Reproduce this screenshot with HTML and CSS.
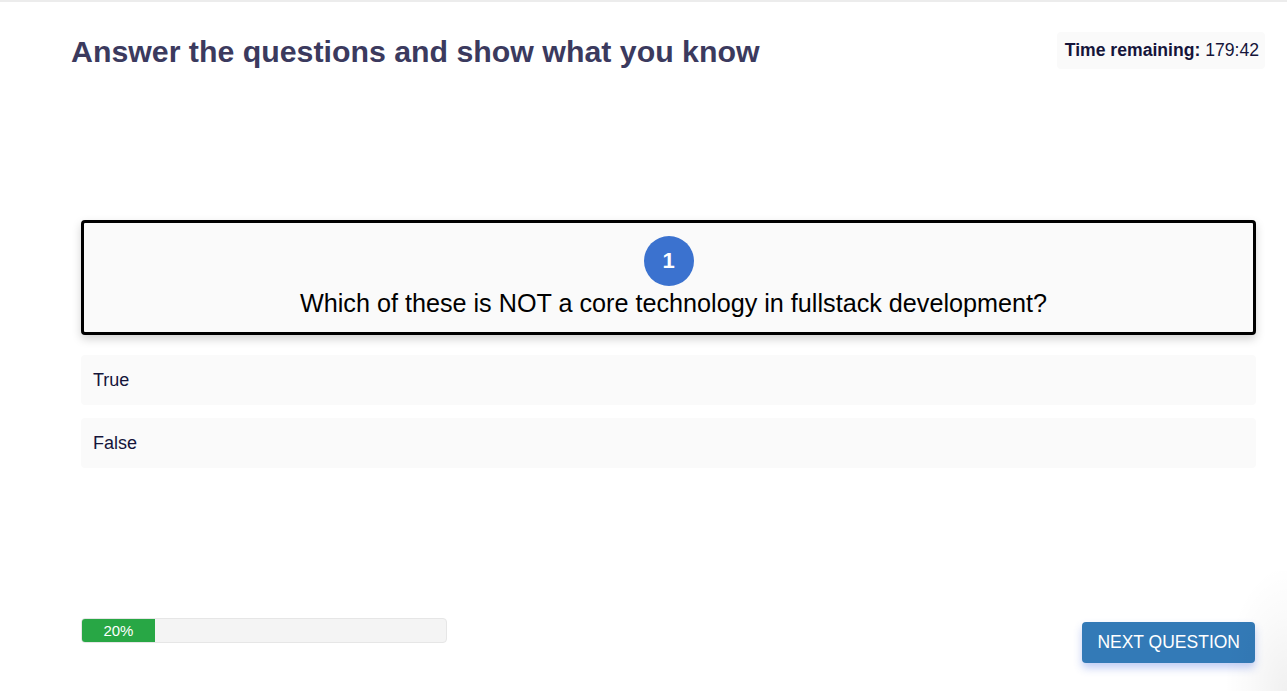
FILE: index.html
```html
<!DOCTYPE html>
<html lang="en">
<head>
<meta charset="utf-8">
<title>Quiz</title>
<link rel="stylesheet" href="styles.css">
</head>
<body>
<div class="page">
  <header class="header">
    <h1 class="title">Answer the questions and show what you know</h1>
    <div class="timer"><strong>Time remaining:</strong> 179:42</div>
  </header>
  <main class="quiz">
    <section class="question-card">
      <div class="q-number">1</div>
      <p class="q-text">Which of these is NOT a core technology in fullstack development?</p>
    </section>
    <ul class="options">
      <li class="option">True</li>
      <li class="option">False</li>
    </ul>
    <div class="footer">
      <div class="progress"><div class="progress-fill" style="width:20%">20%</div></div>
      <button class="next-btn">NEXT QUESTION</button>
    </div>
  </main>
</div>
</body>
</html>
```
FILE: styles.css
```css
* { box-sizing: border-box; }
html, body { margin: 0; padding: 0; }
body {
  font-family: "Liberation Sans", Arial, sans-serif;
  background: #ffffff;
  color: #1b1b3a;
  width: 1287px;
  height: 691px;
  overflow: hidden;
}
.page {
  border-top: 2px solid #ececec;
  height: 691px;
  position: relative;
}
.page::after {
  content: "";
  position: absolute;
  right: 0;
  bottom: 0;
  width: 60px;
  height: 120px;
  background: radial-gradient(ellipse at 100% 100%, rgba(0,0,0,0.06) 0%, rgba(0,0,0,0.02) 45%, rgba(0,0,0,0) 75%);
  pointer-events: none;
}
.header {
  display: flex;
  justify-content: space-between;
  align-items: flex-start;
  padding: 30px 22px 0 71px;
}
.title {
  margin: 2px 0 0;
  font-size: 30.3px;
  font-weight: 700;
  color: #3b3a5e;
  line-height: 36px;
}
.timer {
  background: #fafafa;
  border-radius: 4px;
  padding: 0 6px 0 8px;
  height: 37px;
  line-height: 37px;
  font-size: 17.6px;
  color: #15153a;
}
.quiz {
  margin: 150px 31px 0 81px;
}
.question-card {
  background: #fafafa;
  border: 3px solid #000;
  border-radius: 4px;
  box-shadow: 0 4px 10px rgba(0,0,0,0.18);
  height: 115px;
  display: flex;
  flex-direction: column;
  align-items: center;
  padding-top: 13px;
}
.q-number {
  width: 50px;
  height: 50px;
  border-radius: 50%;
  background: #3b72cf;
  color: #fff;
  font-weight: 700;
  font-size: 22px;
  display: flex;
  align-items: center;
  justify-content: center;
}
.q-text {
  margin: 2px 0 0;
  padding-left: 10px;
  font-size: 25.2px;
  line-height: 30px;
  color: #000;
}
.options {
  list-style: none;
  margin: 20px 0 0;
  padding: 0;
  display: flex;
  flex-direction: column;
  gap: 13px;
}
.option {
  background: #fafafa;
  border-radius: 4px;
  height: 50px;
  line-height: 50px;
  padding-left: 12px;
  font-size: 18px;
  color: #15153a;
}
.footer {
  margin-top: 150px;
  display: flex;
  justify-content: space-between;
  align-items: flex-start;
}
.progress {
  width: 366px;
  height: 25px;
  background: #f4f4f4;
  border: 1px solid #e6e6e6;
  border-radius: 4px;
  overflow: hidden;
}
.progress-fill {
  height: 100%;
  background: #28a745;
  color: #fff;
  font-size: 15px;
  line-height: 23px;
  text-align: center;
}
.next-btn {
  margin-top: 4px;
  margin-right: 1px;
  background: #337ab7;
  color: #fff;
  border: none;
  border-radius: 4px;
  height: 41px;
  padding: 0 15px;
  font-family: "Liberation Sans", Arial, sans-serif;
  font-size: 17.5px;
  box-shadow: 0 5px 9px rgba(51, 90, 220, 0.3);
}
```
